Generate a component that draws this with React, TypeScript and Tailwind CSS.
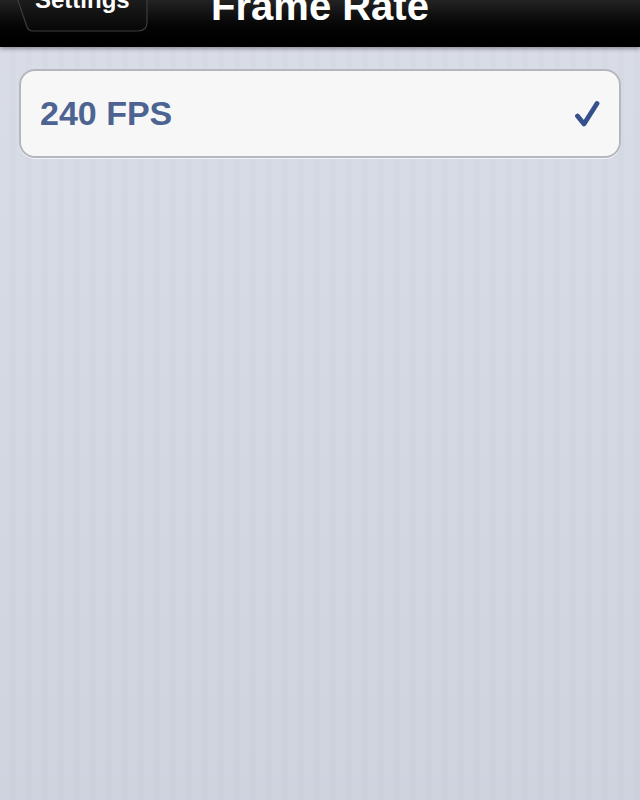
// Frame rate picker screen (iOS 6 grouped table style).

const BG_STRIPES =
  'bg-[repeating-linear-gradient(90deg,#d6dae4_0px,#d6dae4_10px,#d0d5df_10px,#d0d5df_16px)]';

function BackButton({ label }: { label: string }) {
  return (
    <div className="relative ml-[10px] flex h-[52px] w-[138px] items-start justify-self-start">
      <svg className="absolute inset-0" width="138" height="52" viewBox="0 0 138 52">
        <defs>
          <linearGradient id="btn" x1="0" y1="0" x2="0" y2="1">
            <stop offset="0" stopColor="#2a2a2a" />
            <stop offset="1" stopColor="#060606" />
          </linearGradient>
        </defs>
        <path
          d="M1 0 L17 47 Q18.5 51 23 51 L128 51 Q137 51 137 42 L137 0 Z"
          fill="url(#btn)"
          stroke="#3c3c3c"
          strokeWidth="1.2"
        />
      </svg>
      <span className="relative ml-[25px] mt-[5px] text-[24px] font-bold leading-[30px] text-white">
        {label}
      </span>
    </div>
  );
}

function CheckMark() {
  return (
    <svg width="26" height="28" viewBox="0 0 26 28" className="shrink-0">
      <path
        d="M3.5 16 L10 24 L23 3.5"
        fill="none"
        stroke="#35508a"
        strokeWidth="4.8"
        strokeLinecap="round"
        strokeLinejoin="round"
      />
    </svg>
  );
}

export default function App() {
  return (
    <div
      className={`relative h-[800px] w-[640px] overflow-hidden ${BG_STRIPES} [font-family:'Liberation_Sans',Arial,sans-serif]`}
    >
      <div className="pointer-events-none absolute inset-0 bg-gradient-to-b from-[#dfe2ea]/40 to-[#c4c9d6]/40" />

      <header className="relative flex h-[47px] flex-col bg-gradient-to-b from-[#232323] to-[#000000] shadow-[0_2px_4px_rgba(0,0,0,0.35)]">
        <div className="-mt-[20px] grid grid-cols-[1fr_auto_1fr] items-start">
          <BackButton label="Settings" />
          <h1 className="mt-[4px] text-center text-[40px] font-bold leading-[44px] text-white">
            Frame Rate
          </h1>
          <div />
        </div>
      </header>

      <main className="relative px-[19px] pt-[22px]">
        <div className="flex h-[89px] items-center justify-between rounded-[16px] border-2 border-[#b4b7bd] bg-[#f7f7f7] px-[19px] shadow-[0_1px_0_rgba(255,255,255,0.7)]">
          <span className="text-[34px] font-bold text-[#4d6391]">240 FPS</span>
          <CheckMark />
        </div>
      </main>
    </div>
  );
}
